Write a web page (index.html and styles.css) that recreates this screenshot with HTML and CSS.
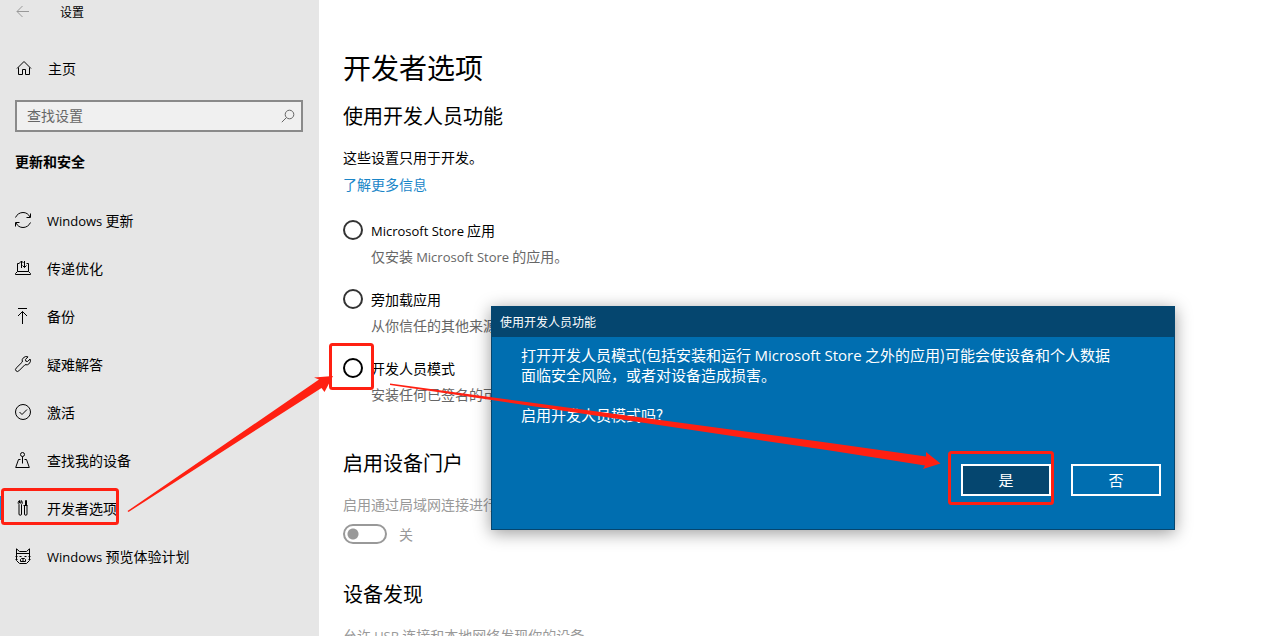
FILE: index.html
```html
<!DOCTYPE html>
<html lang="zh-CN">
<head>
<meta charset="utf-8">
<title>设置</title>
<link rel="stylesheet" href="styles.css">
</head>
<body>
<div class="window">
  <aside class="sidebar">
    <header class="titlebar">
      <button class="back" aria-label="返回">
        <svg width="14" height="12" viewBox="0 0 14 12"><path d="M13 5.500H1M6.500 0 1 5.500 6.500 11"/></svg>
      </button>
      <span class="app-name">设置</span>
    </header>
    <a class="home" href="#">
      <svg class="icon" viewBox="0 0 16 16"><path d="M1 8.500 8 1.500l7 7M2.500 7.500v7h4v-5h3v5h4v-7"/></svg>
      <span>主页</span>
    </a>
    <div class="search">
      <input class="search-input" type="text" placeholder="查找设置" aria-label="查找设置">
      <svg class="search-icon" viewBox="0 0 14 14"><circle cx="8.500" cy="5.500" r="4.300"/><path d="M5.500 8.500.8 13.200"/></svg>
    </div>
    <h2 class="group">更新和安全</h2>
    <nav class="nav">
      <a class="nav-item" href="#">
        <svg class="icon" viewBox="0 0 16 16"><path d="M.5 5.500C2 2.300 4.800.500 8 .500s5.500 1.600 7 4.500M15.500 1.500v4h-4M15.500 10.500c-1.500 3.200-4.300 5-7.500 5s-5.500-1.600-7-4.500M.5 14.500v-4h4"/></svg>
        <span><span class="latin">Windows</span> 更新</span>
      </a>
      <a class="nav-item" href="#">
        <svg class="icon" viewBox="0 0 16 16"><path d="M4.500 3.500h-2v8M11.500 3.500h2v8M2.500 11.500h11l2 2v1H.5v-1zM6.500 8V1M4.500 3l2-2 2 2M9.500 1v6.500M7.500 5.500l2 2 2-2"/></svg>
        <span>传递优化</span>
      </a>
      <a class="nav-item" href="#">
        <svg class="icon" viewBox="0 0 16 16"><path d="M3 .5h9M7.500 16V3.500M3 8l4.500-4.500L12 8"/></svg>
        <span>备份</span>
      </a>
      <a class="nav-item" href="#">
        <svg class="icon" viewBox="0 0 16 16"><path d="M13 .9A4.200 4.200 0 0 0 7.300 6L1.100 12.200a1.900 1.900 0 0 0 2.700 2.700L10 8.700a4.200 4.200 0 0 0 5.100-5.700L12.600 5.500 10.800 5.200 10.500 3.400z"/></svg>
        <span>疑难解答</span>
      </a>
      <a class="nav-item" href="#">
        <svg class="icon" viewBox="0 0 16 16"><circle cx="8" cy="8" r="7.500"/><path d="m4.500 8 2.500 2.500 5-5"/></svg>
        <span>激活</span>
      </a>
      <a class="nav-item" href="#">
        <svg class="icon" viewBox="0 0 16 16"><circle cx="7.500" cy="2.500" r="2"/><path d="M7.500 4.500v7M5.500 7.500h-2l-2.800 8h13.600l-2.800-8h-2"/></svg>
        <span>查找我的设备</span>
      </a>
      <a class="nav-item current" href="#" aria-current="page">
        <svg class="icon" viewBox="0 0 16 16"><path d="M4.500.5C3 1 2.700 3.500 4 4.500V14a1.200 1.200 0 0 0 2.500 0V4.500C7.800 3.500 7.500 1 6 .5v2.500H4.500zM10.500.5v5M8.500 5.500h4M9.500 5.500V14a1.200 1.200 0 0 0 2.500 0V5.500M10.500.5h1v5"/></svg>
        <span>开发者选项</span>
      </a>
      <a class="nav-item" href="#">
        <svg class="icon" viewBox="0 0 16 16"><path d="M1.500 8V.8L4.500 3.500h7L14.500.8V8M1.500 5.500h13M.5 8.500h2M13.500 8.500h2M.5 11.500h2M13.500 11.500h2M1.500 8.500v4l3 3h7l3-3v-4M4.500 8.500h2M9.500 8.500h2M6.500 10.500h3l1 1v2h-5v-2zM8 11v3"/></svg>
        <span><span class="latin">Windows</span> 预览体验计划</span>
      </a>
    </nav>
  </aside>

  <main class="content">
    <h1 class="page-title">开发者选项</h1>
    <h2 class="section-title first">使用开发人员功能</h2>
    <p class="text">这些设置只用于开发。</p>
    <a class="link" href="#">了解更多信息</a>
    <div class="options">
      <div class="option">
        <label class="option-label"><input class="radio" type="radio" name="mode"><span><span class="latin">Microsoft Store</span> 应用</span></label>
        <p class="option-note">仅安装 <span class="latin">Microsoft Store</span> 的应用。</p>
      </div>
      <div class="option">
        <label class="option-label"><input class="radio" type="radio" name="mode"><span>旁加载应用</span></label>
        <p class="option-note">从你信任的其他来源</p>
      </div>
      <div class="option">
        <label class="option-label"><input class="radio hot" type="radio" name="mode"><span>开发人员模式</span></label>
        <p class="option-note">安装任何已签名的可</p>
      </div>
    </div>
    <h2 class="section-title portal">启用设备门户</h2>
    <p class="text muted">启用通过局域网连接进行</p>
    <label class="switch-row"><input class="switch" type="checkbox" role="switch" disabled><span>关</span></label>
    <h2 class="section-title discovery">设备发现</h2>
    <p class="text muted">允许 <span class="latin">USB</span> 连接和本地网络发现你的设备。</p>
  </main>

  <section class="dialog" role="dialog" aria-labelledby="dialog-title">
    <h2 class="dialog-title" id="dialog-title">使用开发人员功能</h2>
    <div class="dialog-body">
      <p class="dialog-text">打开开发人员模式(包括安装和运行 <span class="dialog-latin">Microsoft Store</span> 之外的应用)可能会使设备和个人数据<br>面临安全风险，或者对设备造成损害。</p>
      <p class="dialog-text">启用开发人员模式吗?</p>
      <div class="dialog-actions">
        <button class="dialog-button primary">是</button>
        <button class="dialog-button">否</button>
      </div>
    </div>
  </section>

  <svg class="marks" width="1279" height="636" viewBox="0 0 1279 636" aria-hidden="true">
    <g class="mark-box">
      <rect x="2.500" y="489.500" width="115" height="34" rx="2"/>
      <rect x="330.500" y="344.500" width="42" height="44" rx="2"/>
      <rect x="949.500" y="452.500" width="103" height="51" rx="2"/>
    </g>
    <path class="mark-arrow" d="M127.500 511 319 379.500 314 377.500 333 376 324.500 392 321.500 388 128.500 512z"/>
    <path class="mark-arrow" d="M390 383.500 830 443 926 456.500 926 452 940.500 463.500 923 469 925 465.500 830 450.500 390 385z"/>
  </svg>
</div>
</body>
</html>
```
FILE: styles.css
```css
* {
  box-sizing: border-box;
}

body,
h1,
h2,
p {
  margin: 0;
}

body,
button,
input {
  font-family: "Noto Sans CJK SC", "Open Sans", sans-serif;
  font-size: 14px;
  line-height: 20px;
}

body {
  color: #000;
  background: #fff;
}

a {
  color: inherit;
  text-decoration: none;
}

.window {
  position: relative;
  display: flex;
  height: 100vh;
  overflow: hidden;
}

.latin,
.dialog-latin {
  font-family: "Open Sans", sans-serif;
  font-size: 13px;
  line-height: 1;
}

/* Sidebar */

.sidebar {
  flex: none;
  width: 319px;
  background: #e6e6e6;
}

.titlebar {
  display: flex;
  align-items: center;
  gap: 30px;
  height: 24px;
  padding-left: 16px;
}

.back {
  display: flex;
  padding: 0;
  border: 0;
  background: none;
}

.back svg {
  fill: none;
  stroke: #999;
}

.app-name {
  font-size: 12px;
}

.icon {
  flex: none;
  width: 16px;
  height: 16px;
  fill: none;
  stroke: #000;
  overflow: visible;
}

.home {
  display: flex;
  align-items: center;
  gap: 16px;
  height: 48px;
  margin-top: 20px;
  padding-left: 16px;
}

.search {
  display: flex;
  align-items: center;
  height: 32px;
  margin: 8px 16px 0 15px;
  padding: 0 6px 0 10px;
  border: 2px solid #8a8a8a;
  background: #f0f0f0;
}

.search-input {
  flex: 1;
  min-width: 0;
  padding: 0 0 2px;
  border: 0;
  outline: 0;
  background: none;
}

.search-input::placeholder {
  color: #666;
  opacity: 1;
}

.search-icon {
  width: 14px;
  height: 14px;
  fill: none;
  stroke: #666;
}

.group {
  margin: 19px 0 0 15px;
  font-size: 14px;
  font-weight: 700;
}

.nav {
  margin-top: 25px;
}

.nav-item {
  display: flex;
  align-items: center;
  gap: 16px;
  height: 48px;
  padding-left: 15px;
}

.current {
  background: linear-gradient(#1c8fd6, #1c8fd6) left center / 3px 24px no-repeat;
}

/* Content */

.content {
  flex: 1;
  min-width: 0;
  padding: 47px 24px 0;
}

.page-title {
  font-size: 28px;
  font-weight: 400;
  line-height: 40px;
}

.section-title {
  margin-bottom: 17px;
  font-size: 20px;
  font-weight: 400;
  line-height: 28px;
}

.first {
  margin-top: 15px;
}

.portal {
  margin-top: 44px;
}

.discovery {
  margin-top: 36px;
}

.link {
  display: block;
  width: fit-content;
  margin-top: 7px;
  color: #1a86c8;
}

.muted {
  color: #999;
}

.options {
  display: grid;
  gap: 22px;
  margin-top: 26px;
}

.option-label {
  display: flex;
  align-items: center;
  gap: 8px;
  height: 20px;
}

.option-label span {
  padding-bottom: 1px;
}

.option-note {
  margin: 6px 0 0 28px;
  padding-bottom: 1px;
  color: #666;
}

.radio {
  flex: none;
  appearance: none;
  width: 20px;
  height: 20px;
  margin: 0;
  border: 2px solid #333;
  border-radius: 50%;
}

.hot {
  border-color: #000;
}

.switch-row {
  display: flex;
  align-items: center;
  gap: 12px;
  margin-top: 10px;
  color: #999;
}

.switch {
  flex: none;
  appearance: none;
  width: 44px;
  height: 20px;
  margin: 0;
  border: 2px solid #999;
  border-radius: 10px;
  background: radial-gradient(circle at 8px 8px, #999 5px, transparent 6px);
}

/* Dialog */

.dialog {
  position: absolute;
  top: 306px;
  left: 491px;
  width: 684px;
  border: 1px solid #05466f;
  color: #fff;
  background: #006eb0;
  box-shadow: 0 3px 16px rgba(0, 0, 0, 0.4);
}

.dialog-title {
  padding: 5px 8px;
  font-size: 12px;
  font-weight: 400;
  line-height: 20px;
  background: #05466f;
}

.dialog-body {
  padding: 8px 13px 33px 29px;
}

.dialog-text {
  margin-bottom: 20px;
  font-size: 15px;
}

.dialog-latin {
  font-size: 15px;
}

.dialog-actions {
  display: flex;
  justify-content: flex-end;
  gap: 20px;
  margin-top: 39px;
}

.dialog-button {
  width: 90px;
  height: 32px;
  padding: 0;
  border: 2px solid #fff;
  color: #fff;
  font-size: 15px;
  background: #006eb0;
}

.primary {
  background: #05466f;
}

/* Red callouts over the window */

.marks {
  position: absolute;
  top: 0;
  left: 0;
  pointer-events: none;
}

.mark-box {
  fill: none;
  stroke: #ff2012;
  stroke-width: 3;
}

.mark-arrow {
  fill: #ff2012;
}
```
